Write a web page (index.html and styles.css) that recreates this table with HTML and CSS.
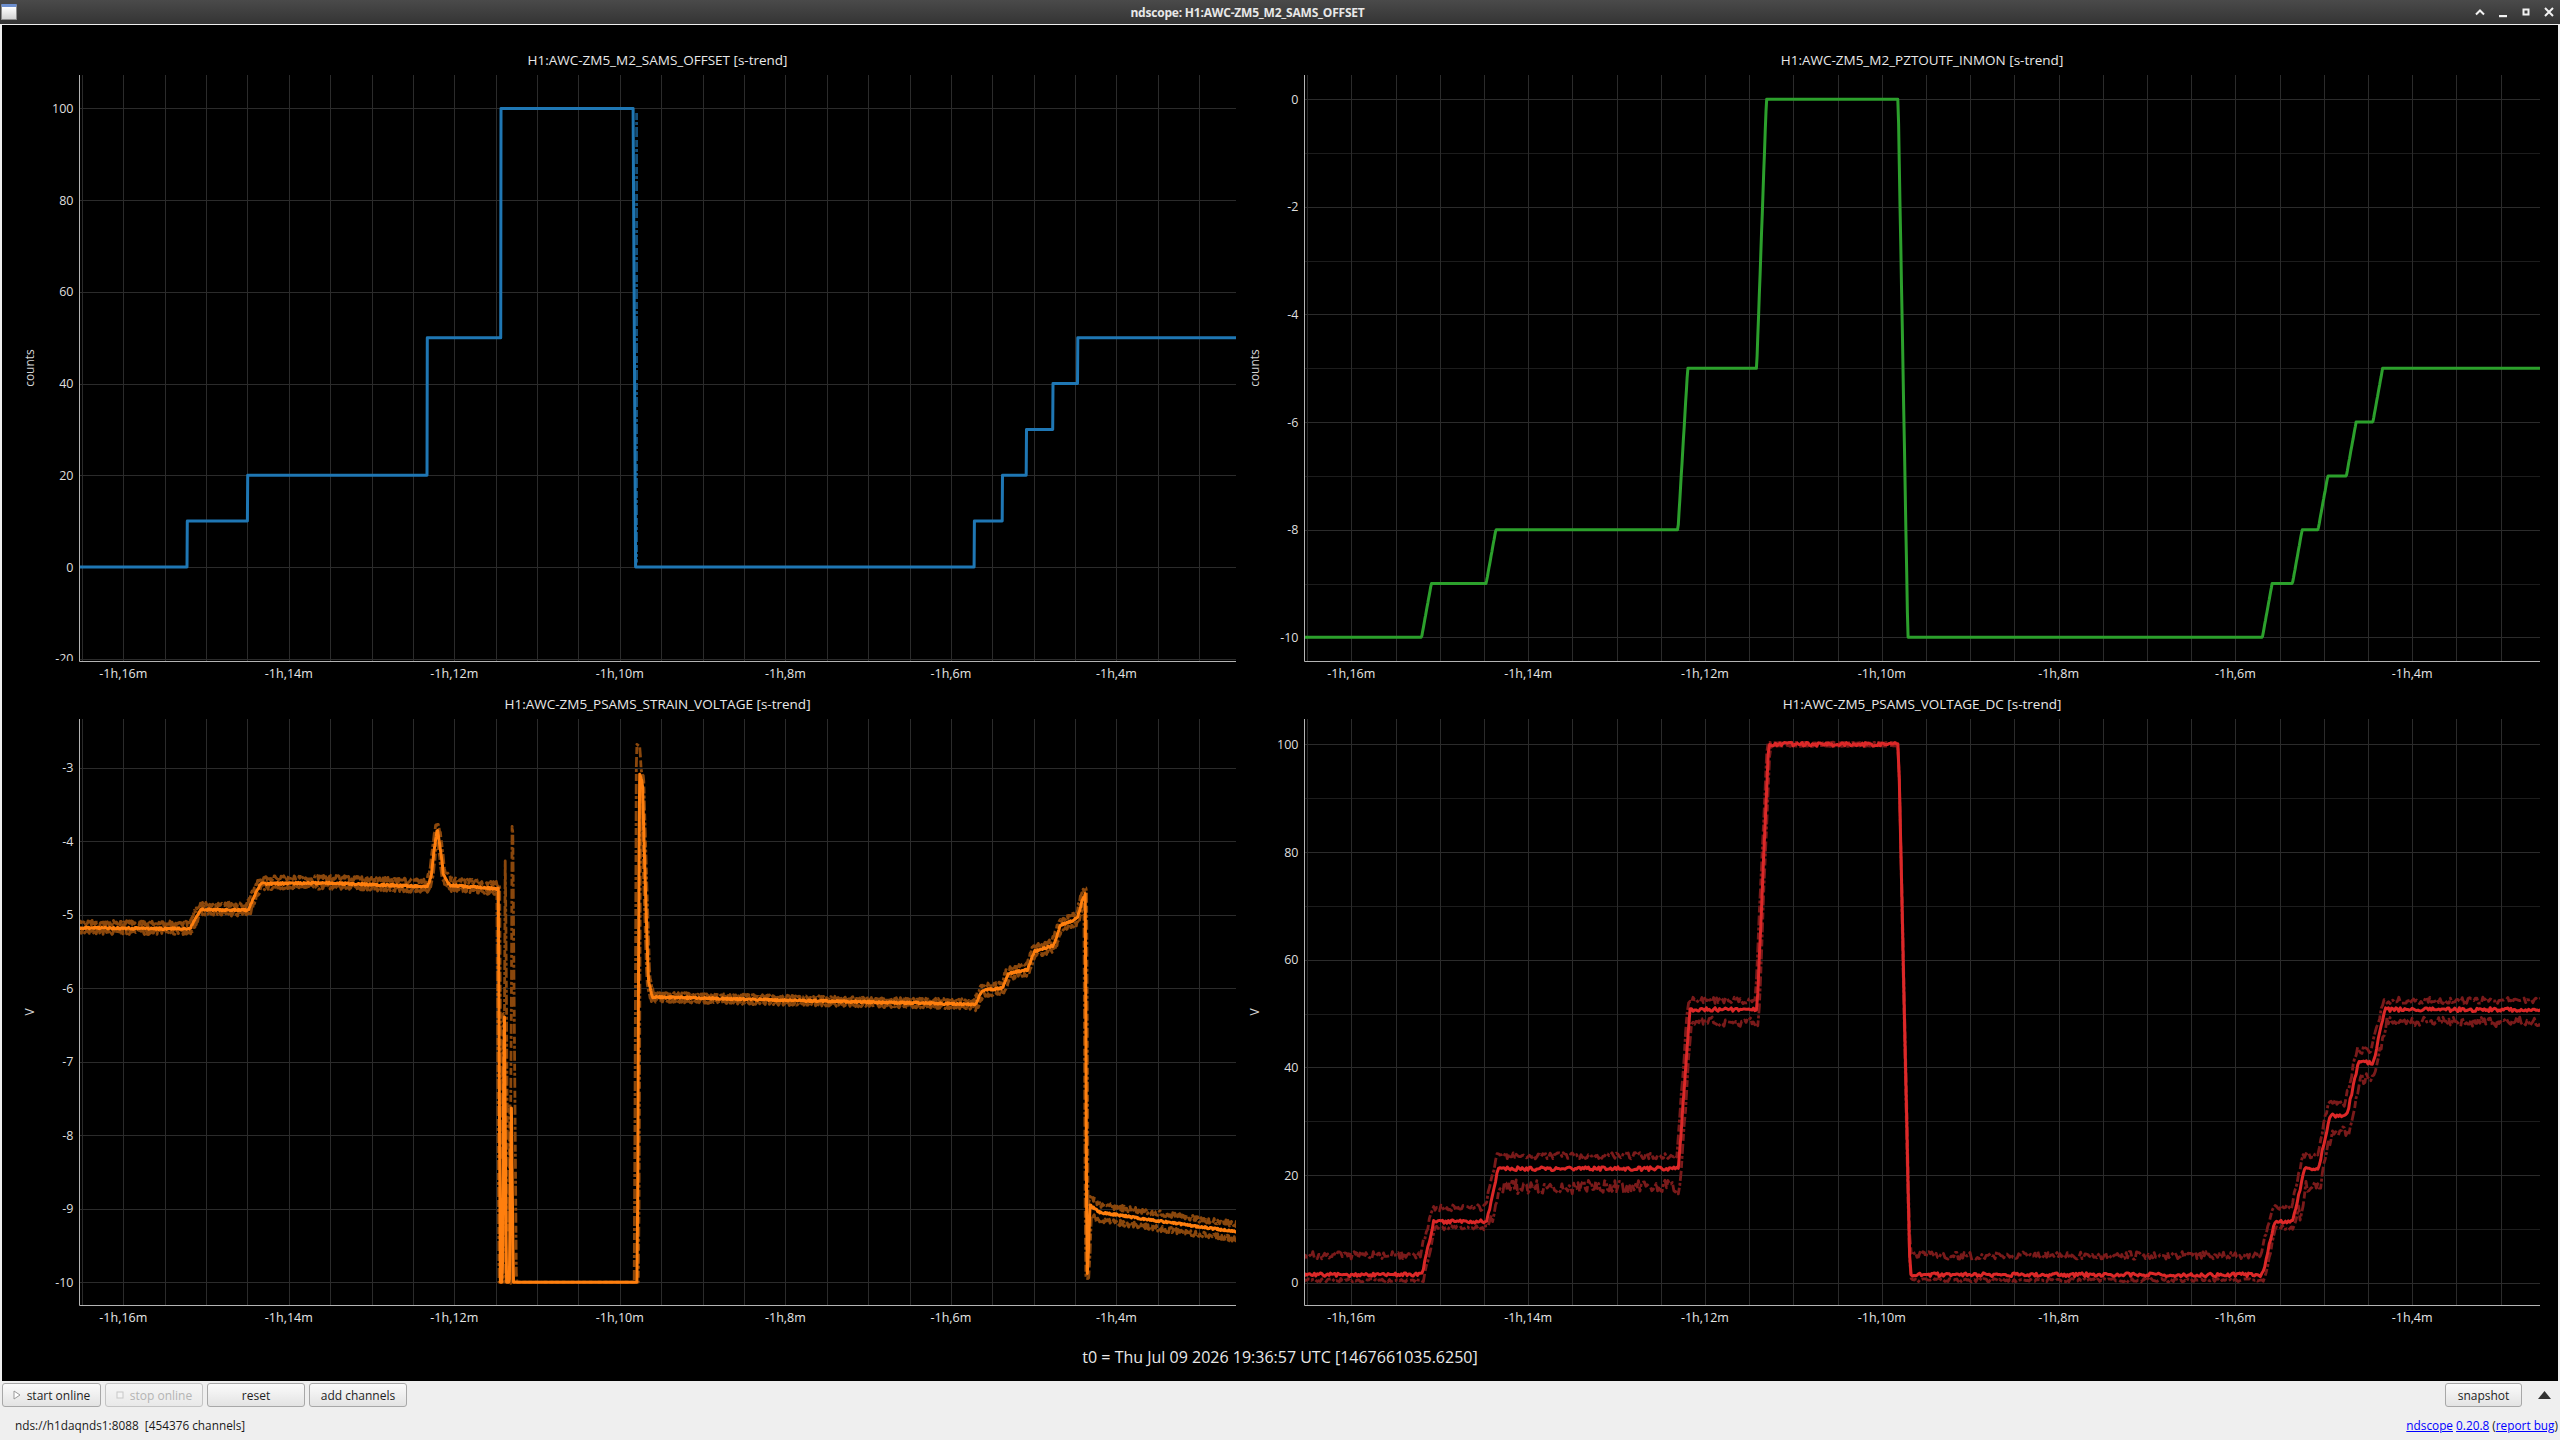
FILE: index.html
```html
<!DOCTYPE html>
<html lang="en">
<head>
<meta charset="utf-8">
<title>ndscope: H1:AWC-ZM5_M2_SAMS_OFFSET</title>
<link rel="stylesheet" href="styles.css">
</head>
<body>
<div class="window">
  <header class="titlebar">
    <div class="app-icon"></div>
    <div class="wm-title">ndscope: H1:AWC-ZM5_M2_SAMS_OFFSET</div>
    <div class="wm-buttons">
      <svg class="wm-btn" viewBox="0 0 12 12"><polyline class="s" points="2,8.5 6,4.5 10,8.5"/></svg>
      <svg class="wm-btn" viewBox="0 0 12 12"><rect class="f" x="2" y="9" width="8" height="2.2"/></svg>
      <svg class="wm-btn" viewBox="0 0 12 12"><rect class="s" x="3.5" y="3.5" width="5" height="5"/></svg>
      <svg class="wm-btn" viewBox="0 0 12 12"><path class="s" d="M2 2L10 10M10 2L2 10"/></svg>
    </div>
  </header>
  <main class="scope">
    <div class="plots">
      <svg class="plot" id="p-offset" width="1238" height="644"></svg>
      <svg class="plot" id="p-pzt" width="1318" height="644"></svg>
      <svg class="plot" id="p-strain" width="1238" height="644"></svg>
      <svg class="plot" id="p-dc" width="1318" height="644"></svg>
    </div>
    <div class="t0">t0 = Thu Jul 09 2026 19:36:57 UTC [1467661035.6250]</div>
  </main>
  <div class="controls">
    <button class="btn b-start"><svg class="btn-ico" viewBox="0 0 8 10"><polygon points="1,1 7,5 1,9"/></svg><span>start online</span></button>
    <button class="btn b-stop" disabled><svg class="btn-ico" viewBox="0 0 8 10"><rect x="1" y="2" width="6" height="6"/></svg><span>stop online</span></button>
    <button class="btn b-reset">reset</button>
    <button class="btn b-add">add channels</button>
    <button class="btn b-snap">snapshot</button>
    <div class="expand"><svg class="expand-ico" viewBox="0 0 13 8"><polygon points="6.5,0 13,8 0,8"/></svg></div>
  </div>
  <div class="status">
    <span class="server">nds://h1daqnds1:8088  [454376 channels]</span>
    <span class="about"><a href="#">ndscope</a> <a href="#">0.20.8</a> (<a href="#">report bug</a>)</span>
  </div>
</div>
<script src="script.js"></script>
</body>
</html>
```

FILE: styles.css
```css
html, body {
  margin: 0;
  padding: 0;
}
body {
  width: 2560px;
  height: 1440px;
  overflow: hidden;
  background: #efefef;
  font-family: "Open Sans", "Noto Sans", "DejaVu Sans", sans-serif;
}
.window {
  display: flex;
  flex-direction: column;
  height: 1440px;
}
.titlebar {
  height: 24px;
  flex: none;
  display: flex;
  align-items: center;
  background: linear-gradient(#4a4a4a, #343434);
}
.app-icon {
  width: 16px;
  height: 16px;
  margin-left: 1px;
  box-sizing: border-box;
  border: 1px solid #8c8c8c;
  border-top: 3px solid #6d8fcf;
  border-radius: 1px;
  background: linear-gradient(#ffffff, #d2d2d2);
}
.wm-title {
  flex: 1;
  text-align: center;
  padding-left: 4px;
  color: #e8e8e8;
  font-weight: 700;
  font-size: 12px;
  letter-spacing: -0.2px;
  white-space: nowrap;
}
.wm-buttons {
  display: flex;
  gap: 11px;
  margin-right: 5px;
}
.wm-btn {
  width: 12px;
  height: 12px;
  display: block;
}
.wm-btn .s {
  fill: none;
  stroke: #f2f2f2;
  stroke-width: 2;
}
.wm-btn .f {
  fill: #f2f2f2;
}
.scope {
  flex: none;
  margin: 1px 2px 0;
  height: 1356px;
  background: #000;
}
.plots {
  padding-top: 16px;
  display: grid;
  grid-template-columns: 1238px 1318px;
  grid-template-rows: 644px 644px;
}
.plot {
  display: block;
}
.t0 {
  height: 52px;
  box-sizing: border-box;
  padding-top: 18px;
  line-height: 20px;
  text-align: center;
  color: #e8e8e8;
  font-size: 16px;
}

/* svg chart pieces */
.grid {
  fill: none;
  stroke: #2b2b2b;
  stroke-width: 1;
}
.grid-minor {
  fill: none;
  stroke: #1c1c1c;
  stroke-width: 1;
}
.axis {
  fill: none;
  stroke: #b4b4b4;
  stroke-width: 1;
}
.line {
  fill: none;
  stroke-width: 3;
  stroke-linejoin: round;
}
.blue { stroke: #1f77b4; }
.green { stroke: #2ca02c; }
.orange { stroke: #ff7f0e; }
.red { stroke: #dc2828; }
.band {
  fill: none;
  stroke-width: 2.8;
  stroke-linejoin: round;
  stroke-dasharray: 7 2 3 2 10 3;
}
.band-blue { stroke: #164f78; }
.band-orange { stroke: #8a470c; }
.band-red { stroke: #7a1a1a; }
.ptitle {
  font-size: 13.5px;
  fill: #e8e8e8;
  text-anchor: middle;
  dominant-baseline: central;
}
.ylabel {
  font-size: 12px;
  fill: #d4d4d4;
  text-anchor: middle;
  dominant-baseline: central;
}
.ytick text {
  font-size: 12.5px;
  fill: #dedede;
  text-anchor: end;
  dominant-baseline: central;
}
.xtick text {
  font-size: 12.5px;
  fill: #e6e6e6;
  text-anchor: middle;
  dominant-baseline: central;
}

/* bottom controls */
.controls {
  height: 28px;
  flex: none;
  box-sizing: border-box;
  padding: 2px 2px 0;
  display: flex;
  align-items: flex-start;
  gap: 4px;
}
.btn {
  height: 24px;
  width: 98px;
  margin: 0;
  padding: 0;
  box-sizing: border-box;
  border: 1px solid #a8a8a8;
  border-radius: 3px;
  background: linear-gradient(#fbfbfb, #e3e3e3);
  font-family: "Open Sans", "Noto Sans", sans-serif;
  font-size: 12px;
  color: #1e1e1e;
  display: flex;
  align-items: center;
  justify-content: center;
  gap: 6px;
}
.b-start {
  width: 99px;
}
.btn-ico {
  width: 8px;
  height: 10px;
  display: block;
}
.b-start .btn-ico polygon {
  fill: #ffffff;
  stroke: #9a9a9a;
  stroke-width: 1;
}
.b-stop {
  color: #b4b4b4;
  border-color: #c4c4c4;
  background: linear-gradient(#f6f6f6, #e9e9e9);
}
.b-stop .btn-ico rect {
  fill: #f4f4f4;
  stroke: #c8c8c8;
  stroke-width: 1;
}
.b-snap {
  width: 77px;
  margin-left: auto;
}
.expand {
  width: 32px;
  height: 24px;
  box-sizing: border-box;
  padding-left: 4px;
  display: flex;
  align-items: center;
  justify-content: center;
}
.expand-ico {
  width: 13px;
  height: 8px;
  display: block;
  fill: #333333;
}
.status {
  height: 31px;
  flex: none;
  box-sizing: border-box;
  padding: 0 2px 0 15px;
  display: flex;
  justify-content: space-between;
  align-items: center;
  font-size: 11.8px;
  color: #1a1a1a;
}
.server {
  white-space: pre;
}
.about a {
  color: #0000ff;
  text-decoration: underline;
}
```

FILE: script.js
```js
(function () {
  'use strict';
  var TMIN = -16.535, TMAX = -2.555;
  var TOP = 34, H = 586, TITLE_Y = 19, XLAB_Y = 632.5;
  var STEPS = [[-15.23, 10], [-14.50, 20], [-12.33, 50], [-11.44, 100], [-9.84, 0],
               [-5.72, 10], [-5.38, 20], [-5.09, 30], [-4.77, 40], [-4.47, 50]];

  function mulberry(seed) {
    return function () {
      seed = (seed + 0x6D2B79F5) | 0;
      var t = Math.imul(seed ^ (seed >>> 15), 1 | seed);
      t = (t + Math.imul(t ^ (t >>> 7), 61 | t)) ^ t;
      return ((t ^ (t >>> 14)) >>> 0) / 4294967296;
    };
  }
  function ramped(t, delay, dur) {
    var v = 0, prev = 0;
    for (var i = 0; i < STEPS.length; i++) {
      var ts = STEPS[i][0], nv = STEPS[i][1];
      var f = (t - ts - delay) / dur;
      f = f < 0 ? 0 : (f > 1 ? 1 : f);
      v += (nv - prev) * f;
      prev = nv;
    }
    return v;
  }
  function interp(kf, t) {
    if (t <= kf[0][0]) return kf[0][1];
    for (var i = 1; i < kf.length; i++) {
      if (t <= kf[i][0]) {
        var t0 = kf[i - 1][0], v0 = kf[i - 1][1], t1 = kf[i][0], v1 = kf[i][1];
        return v0 + (v1 - v0) * (t - t0) / (t1 - t0);
      }
    }
    return kf[kf.length - 1][1];
  }
  function absToT(a) { return -16 + (a - 124) / 82.75; }
  function toT(list) { return list.map(function (p) { return [absToT(p[0]), p[1]]; }); }
  function f1(n) { return n.toFixed(1); }

  /* ---------- data ---------- */
  function blueData(X, Y) {
    var d = 'M' + f1(X(TMIN)) + ' ' + f1(Y(0));
    var prev = 0;
    for (var i = 0; i < STEPS.length; i++) {
      var ts = STEPS[i][0], nv = STEPS[i][1], x = X(ts);
      d += 'L' + f1(x) + ' ' + f1(Y(prev)) + 'L' + f1(x + (nv < prev ? 2.5 : 0.3)) + ' ' + f1(Y(nv));
      prev = nv;
    }
    d += 'L' + f1(X(TMAX) + 2) + ' ' + f1(Y(prev));
    var xd = X(-9.84) + 3.5;
    return '<path class="band band-blue" d="M' + f1(xd) + ' ' + f1(Y(99)) + 'V' + f1(Y(1)) + '"/>' +
      '<path class="line blue" d="' + d + '"/>';
  }

  function greenData(X, Y) {
    var pts = [];
    var n = Math.ceil((TMAX - TMIN) * 120) + 2;
    for (var i = 0; i < n; i++) {
      var t = TMIN + i / 120;
      pts.push(f1(X(t)) + ',' + f1(Y(-10 + ramped(t, 0.025, 0.11) / 10)));
    }
    return '<polyline class="line green" points="' + pts.join(' ') + '"/>';
  }

  function redData(X, Y) {
    var r = mulberry(7);
    var main = [], hi = [], lo = [];
    var dt = 1 / 60;
    function f(t) { return 1.5 + 0.985 * ramped(t, 0.03, 0.13); }
    function off(lv) {
      if (lv < 5) return [3.6, 1.0, 0.7, 0.3];
      if (lv < 15) return [2.6, 1.1, 0.6, 0.4];
      if (lv < 25) return [2.4, 3.4, 0.6, 1.3];
      if (lv < 45) return [2.4, 3.0, 0.7, 1.1];
      if (lv < 75) return [1.7, 2.3, 0.6, 0.9];
      return [0.3, 0.3, 0.1, 0.1];
    }
    var n = Math.ceil((TMAX - TMIN) / dt) + 2;
    for (var i = 0; i < n; i++) {
      var t = TMIN + i * dt;
      var lv = ramped(t, 0.03, 0.13);
      var o = off(lv);
      var x = f1(X(t));
      var m = f(t) + (r() - 0.5) * 0.7;
      var h = Math.max(f(t), f(t + dt)) + o[0] + (r() - 0.5) * 2 * o[2];
      var l = Math.min(f(t), f(t - dt)) - o[1] - (r() - 0.5) * 2 * o[3];
      main.push(x + ',' + f1(Y(m)));
      hi.push(x + ',' + f1(Y(h)));
      lo.push(x + ',' + f1(Y(l)));
    }
    return '<polyline class="band band-red" points="' + hi.join(' ') + '"/>' +
      '<polyline class="band band-red" points="' + lo.join(' ') + '"/>' +
      '<polyline class="line red" points="' + main.join(' ') + '"/>';
  }

  var OKF = toT([
    [79, -5.18], [150, -5.19], [191, -5.19], [196, -5.05], [202, -4.93], [249, -4.94],
    [254, -4.78], [261, -4.58], [330, -4.57], [428, -4.62], [432, -4.48], [435, -4.1],
    [438, -3.83], [441, -4.1], [444, -4.45], [450, -4.60], [499, -4.65], [501, -10],
    [503, -10], [505, -6.0], [507, -10], [510, -10], [512, -7.5], [514, -10],
    [638, -10], [640, -3.07], [643, -3.2], [646, -4.6], [649, -5.9], [653, -6.12],
    [800, -6.17], [976, -6.22], [983, -6.03], [1003, -6.00], [1009, -5.80], [1028, -5.75],
    [1035, -5.50], [1054, -5.42], [1061, -5.15], [1078, -5.05], [1083, -4.80], [1086, -4.72],
    [1087.5, -10], [1089, -9.6], [1090.5, -8.95], [1100, -9.05], [1150, -9.15], [1240, -9.32]
  ]);
  var OSPIKES = [
    toT([[504, -10], [506, -3.94], [509, -10]]),
    toT([[511, -10], [513, -3.06], [517, -10]]),
    toT([[635, -10], [637, -2.68], [641, -2.72], [644, -10]])
  ];

  function orangeData(X, Y) {
    var r = mulberry(11);
    var dt = 1 / 120;
    var n = Math.ceil((TMAX - TMIN) / dt) + 2;
    var ms = [], ts = [];
    var i, k;
    for (i = 0; i < n; i++) {
      var t = TMIN + i * dt;
      ts.push(t);
      ms.push(interp(OKF, t));
    }
    var tA = absToT(500), tB = absToT(976), tC = absToT(1090);
    var main = [], hi = [], lo = [];
    for (i = 0; i < n; i++) {
      var tt = ts[i], v = ms[i];
      var x = f1(X(tt));
      var mv = v > -9.99 ? v + (r() - 0.5) * 0.025 : v;
      main.push(x + ',' + f1(Y(mv)));
      var wmax = -1e9, wmin = 1e9;
      for (k = Math.max(0, i - 2); k <= Math.min(n - 1, i + 2); k++) {
        if (ms[k] > wmax) wmax = ms[k];
        if (ms[k] < wmin) wmin = ms[k];
      }
      var oh, ol, nz;
      if (tt < tA) { oh = 0.07; ol = 0.05; nz = 0.035; }
      else if (tt < tB) { oh = 0.045; ol = 0.045; nz = 0.025; }
      else if (tt < tC) { oh = 0.06; ol = 0.06; nz = 0.03; }
      else { oh = 0.1; ol = 0.1; nz = 0.04; }
      var h = wmax <= -9.99 ? -10 : wmax + oh + (r() - 0.5) * 2 * nz;
      var l = wmin <= -9.99 ? -10 : wmin - ol - (r() - 0.5) * 2 * nz;
      for (k = 0; k < OSPIKES.length; k++) {
        var sp = OSPIKES[k];
        if (tt >= sp[0][0] && tt <= sp[sp.length - 1][0]) {
          h = Math.max(h, interp(sp, tt));
        }
      }
      hi.push(x + ',' + f1(Y(h)));
      lo.push(x + ',' + f1(Y(l)));
    }
    return '<polyline class="band band-orange" points="' + hi.join(' ') + '"/>' +
      '<polyline class="band band-orange" points="' + lo.join(' ') + '"/>' +
      '<polyline class="line orange" points="' + main.join(' ') + '"/>';
  }

  /* ---------- plot frame ---------- */
  function render(cfg) {
    var L = cfg.left, W = cfg.width, ymin = cfg.ymin, ymax = cfg.ymax, id = cfg.id;
    function X(t) { return L + (t - TMIN) / (TMAX - TMIN) * W; }
    function Y(v) { return TOP + (ymax - v) / (ymax - ymin) * H; }
    var s = [], j, k, v, y;
    s.push('<defs><clipPath id="' + id + '-c"><rect x="' + L + '" y="' + TOP + '" width="' + W + '" height="' + H + '"/></clipPath>' +
      '<clipPath id="' + id + '-l"><rect x="0" y="' + (TOP - 12) + '" width="' + L + '" height="' + (H + 12) + '"/></clipPath></defs>');
    s.push('<text class="ptitle" x="' + f1(L + W / 2) + '" y="' + TITLE_Y + '">' + cfg.title + '</text>');
    s.push('<text class="ylabel" transform="translate(' + cfg.labelX + ' ' + (TOP + H / 2) + ') rotate(-90)">' + cfg.ylabel + '</text>');

    var gv = [];
    for (k = -33; k <= -6; k++) {
      var x = Math.round(X(k / 2)) + 0.5;
      if (x > L + 1 && x < L + W) gv.push('M' + x + ' ' + TOP + 'V' + (TOP + H));
    }
    var step = cfg.minor || cfg.major;
    var gmaj = [], gmin = [];
    for (j = Math.ceil(ymin / step - 1e-9); j <= Math.floor(ymax / step + 1e-9); j++) {
      v = j * step;
      y = Math.round(Y(v)) + 0.5;
      var q = v / cfg.major;
      var isMaj = Math.abs(q - Math.round(q)) < 1e-6;
      (isMaj ? gmaj : gmin).push('M' + L + ' ' + y + 'H' + (L + W));
    }
    if (gmin.length) s.push('<path class="grid-minor" d="' + gmin.join('') + '"/>');
    s.push('<path class="grid" d="' + gv.join('') + gmaj.join('') + '"/>');

    s.push('<g clip-path="url(#' + id + '-c)">' + cfg.data(X, Y) + '</g>');
    s.push('<path class="axis" d="M' + (L + 0.5) + ' ' + TOP + 'V' + (TOP + H + 0.5) + 'H' + (L + W) + '"/>');

    var yl = [];
    for (j = Math.ceil(ymin / cfg.major - 1e-9); j <= Math.floor(ymax / cfg.major + 1e-9); j++) {
      v = j * cfg.major;
      yl.push('<text x="' + (L - 5.5) + '" y="' + f1(Y(v)) + '">' + String(v === 0 ? 0 : v) + '</text>');
    }
    s.push('<g class="ytick" clip-path="url(#' + id + '-l)">' + yl.join('') + '</g>');

    var xl = [];
    for (k = -16; k <= -4; k += 2) {
      xl.push('<text x="' + f1(X(k)) + '" y="' + XLAB_Y + '">-1h,' + (-k) + 'm</text>');
    }
    s.push('<g class="xtick">' + xl.join('') + '</g>');
    return s.join('');
  }

  var cfgs = [
    { id: 'p-offset', title: 'H1:AWC-ZM5_M2_SAMS_OFFSET [s-trend]', ylabel: 'counts',
      left: 77, width: 1157, labelX: 27, ymin: -20.5, ymax: 107.3, major: 20, minor: 0, data: blueData },
    { id: 'p-pzt', title: 'H1:AWC-ZM5_M2_PZTOUTF_INMON [s-trend]', ylabel: 'counts',
      left: 64, width: 1236, labelX: 14, ymin: -10.44, ymax: 0.45, major: 2, minor: 1, data: greenData },
    { id: 'p-strain', title: 'H1:AWC-ZM5_PSAMS_STRAIN_VOLTAGE [s-trend]', ylabel: 'V',
      left: 77, width: 1157, labelX: 27, ymin: -10.31, ymax: -2.34, major: 1, minor: 0, data: orangeData },
    { id: 'p-dc', title: 'H1:AWC-ZM5_PSAMS_VOLTAGE_DC [s-trend]', ylabel: 'V',
      left: 64, width: 1236, labelX: 14, ymin: -4.12, ymax: 104.7, major: 20, minor: 10, data: redData }
  ];

  cfgs.forEach(function (cfg) {
    var el = document.getElementById(cfg.id);
    if (el) el.innerHTML = render(cfg);
  });
})();
```
